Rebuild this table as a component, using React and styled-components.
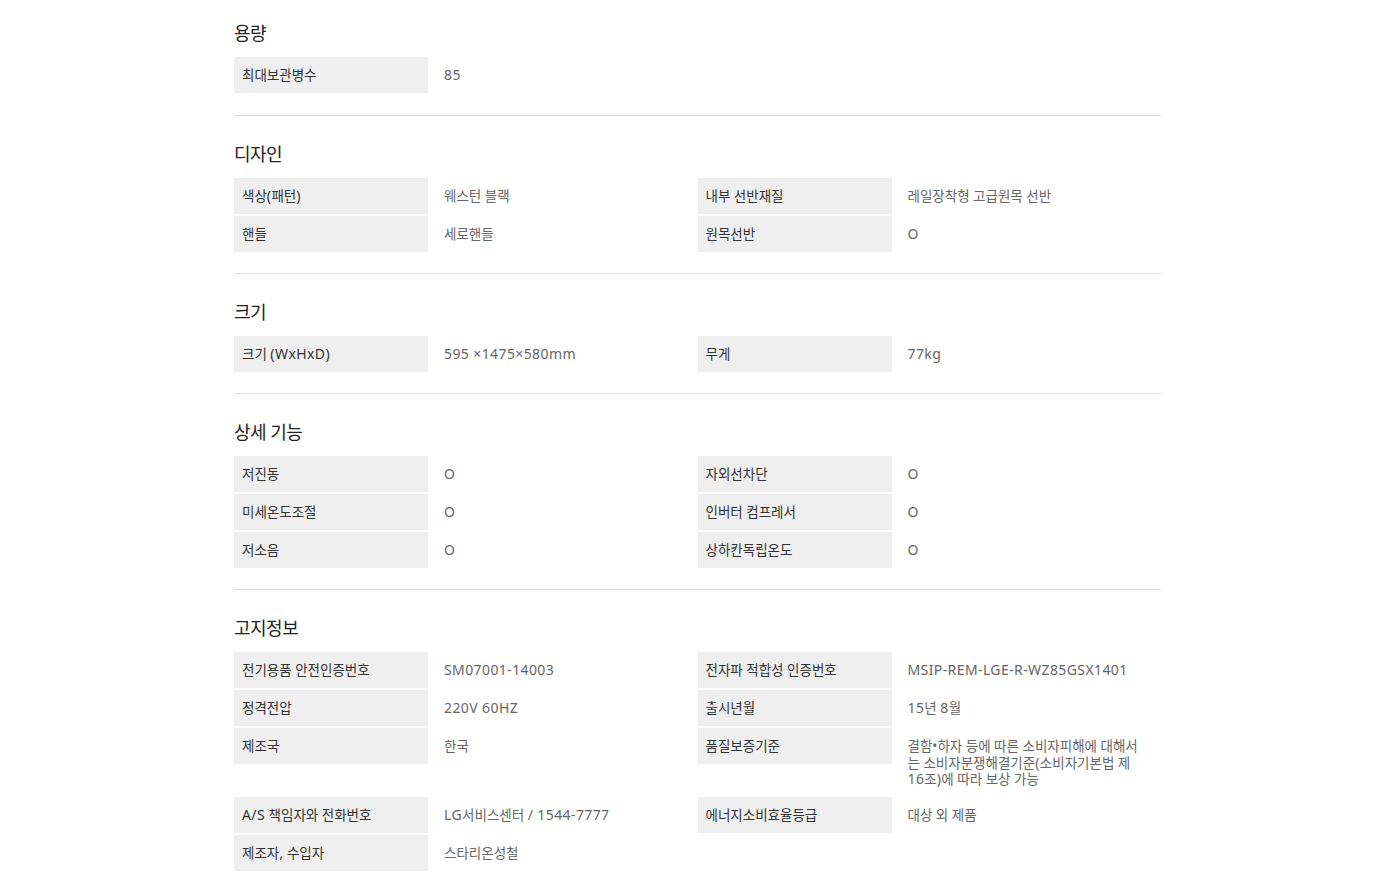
import React from "react";
import styled, { createGlobalStyle } from "styled-components";

const sections = [
  {
    title: "용량",
    rows: [["최대보관병수", "85"]],
  },
  {
    title: "디자인",
    rows: [
      ["색상(패턴)", "웨스턴 블랙"],
      ["내부 선반재질", "레일장착형 고급원목 선반"],
      ["핸들", "세로핸들"],
      ["원목선반", "O"],
    ],
  },
  {
    title: "크기",
    rows: [
      ["크기 (WxHxD)", "595 ×1475×580mm"],
      ["무게", "77kg"],
    ],
  },
  {
    title: "상세 기능",
    rows: [
      ["저진동", "O"],
      ["자외선차단", "O"],
      ["미세온도조절", "O"],
      ["인버터 컴프레서", "O"],
      ["저소음", "O"],
      ["상하칸독립온도", "O"],
    ],
  },
  {
    title: "고지정보",
    last: true,
    rows: [
      ["전기용품 안전인증번호", "SM07001-14003"],
      ["전자파 적합성 인증번호", "MSIP-REM-LGE-R-WZ85GSX1401"],
      ["정격전압", "220V 60HZ"],
      ["출시년월", "15년 8월"],
      ["제조국", "한국"],
      [
        "품질보증기준",
        [
          "결함•하자 등에 따른 소비자피해에 대해서",
          "는 소비자분쟁해결기준(소비자기본법 제",
          "16조)에 따라 보상 가능",
        ],
      ],
      ["A/S 책임자와 전화번호", "LG서비스센터 / 1544-7777"],
      ["에너지소비효율등급", "대상 외 제품"],
      ["제조자, 수입자", "스타리온성철"],
    ],
  },
];

// latin runs get their own span so they come out as wide as in the original
const Text = ({ children }) =>
  children
    .split(/([\x21-\x7E×]+(?: [\x21-\x7E×]+)*)/)
    .map((part, i) => (i % 2 ? <Latin key={i}>{part}</Latin> : part));

const App = () => {
  return (
    <>
      <GlobalStyle />
      <Page>
        {sections.map(({ title, rows, last }, i) => (
          <Section key={title} first={i === 0} last={last}>
            <Title>{title}</Title>
            <Grid>
              {rows.map(([label, value]) => (
                <React.Fragment key={label}>
                  <Label>
                    <Text>{label}</Text>
                  </Label>
                  <Value>
                    {(Array.isArray(value) ? value : [value]).map((line, k) => (
                      <Line key={k}>
                        <Text>{line}</Text>
                      </Line>
                    ))}
                  </Value>
                </React.Fragment>
              ))}
            </Grid>
          </Section>
        ))}
      </Page>
    </>
  );
};
export default App;

const GlobalStyle = createGlobalStyle`
  body {
    margin: 0;
    background: #fff;
    font-family: "Noto Sans", "Noto Sans CJK KR", sans-serif;
  }
`;
const Page = styled.div`
  width: 927px;
  margin-left: calc(50% - 466px);
  height: 895px;
  overflow: hidden;
`;
const Section = styled.section`
  padding: ${({ first }) => (first ? "20px 0 22px" : "25px 0 21px")};
  border-bottom: ${({ last }) => (last ? "none" : "1px solid #dcdcdc")};
`;
const Title = styled.h3`
  margin: 0 0 11px;
  font-size: 18px;
  line-height: 26px;
  font-weight: 400;
  color: #222;
  letter-spacing: -0.5px;
`;
const Grid = styled.div`
  display: grid;
  grid-template-columns: 194px 1fr 194px 1fr;
  row-gap: 2px;
`;
const Label = styled.div`
  align-self: start;
  height: 36px;
  line-height: 36px;
  padding: 0 8px;
  background: #efefef;
  font-size: 13.5px;
  color: #333;
  white-space: nowrap;
`;
const Value = styled.div`
  min-height: 36px;
  box-sizing: border-box;
  padding: 10px 16px 7.5px;
  font-size: 13.5px;
  line-height: 16.5px;
  color: #666;
  white-space: nowrap;
`;
const Line = styled.div``;
const Latin = styled.span`
  font-size: 14px;
  letter-spacing: 0.4px;
`;
